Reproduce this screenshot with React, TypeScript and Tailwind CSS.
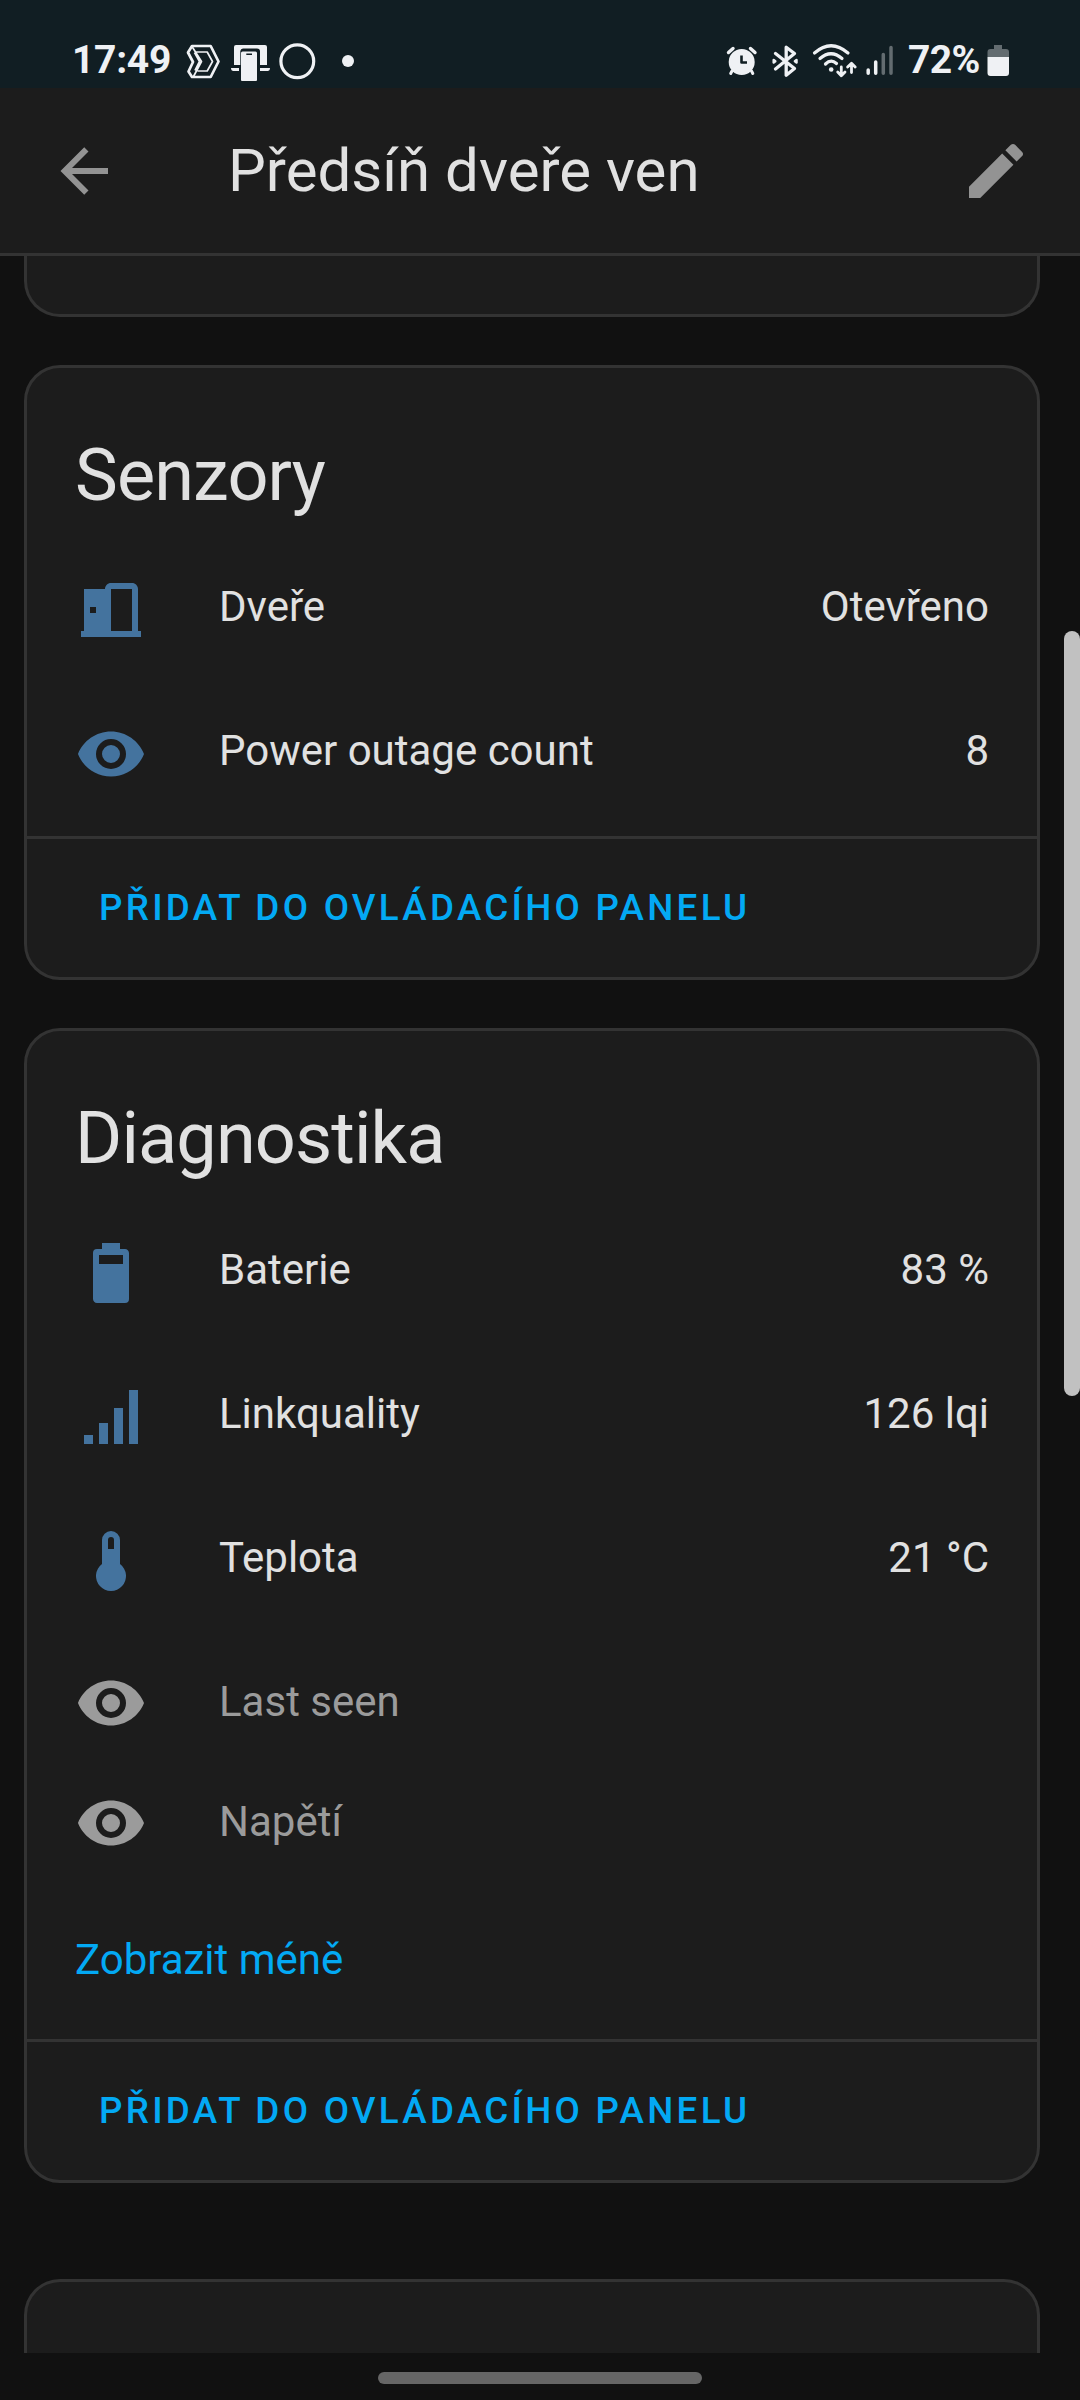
import React from "react";

const icons = {
  arrowLeft:
    "M20,11V13H8L13.5,18.5L12.08,19.92L4.16,12L12.08,4.08L13.5,5.5L8,11H20Z",
  pencil:
    "M20.71,7.04C21.1,6.65 21.1,6 20.71,5.63L18.37,3.29C18,2.9 17.35,2.9 16.96,3.29L15.12,5.12L18.87,8.87M3,17.25V21H6.75L17.81,9.93L14.06,6.18L3,17.25Z",
  door:
    "M12,3C10.89,3 10,3.89 10,5H3V19H2V21H22V19H21V5C21,3.89 20.11,3 19,3H12M12,5H19V19H12V5M5,11H7V13H5V11Z",
  eye:
    "M12,9A3,3 0 0,0 9,12A3,3 0 0,0 12,15A3,3 0 0,0 15,12A3,3 0 0,0 12,9M12,17A5,5 0 0,1 7,12A5,5 0 0,1 12,7A5,5 0 0,1 17,12A5,5 0 0,1 12,17M12,4.5C7,4.5 2.73,7.61 1,12C2.73,16.39 7,19.5 12,19.5C17,19.5 21.27,16.39 23,12C21.27,7.61 17,4.5 12,4.5Z",
  battery:
    "M16,9H8V6H16M16.67,4H15V2H9V4H7.33A1.33,1.33 0 0,0 6,5.33V20.67C6,21.4 6.6,22 7.33,22H16.67A1.33,1.33 0 0,0 18,20.67V5.33C18,4.6 17.4,4 16.67,4Z",
  signal: "M3,21H6V18H3M8,21H11V14H8M13,21H16V9H13M18,21H21V3H18V21Z",
  thermometer:
    "M15 13V5A3 3 0 0 0 9 5V13A5 5 0 1 0 15 13M12 4A1 1 0 0 1 13 5V8H11V5A1 1 0 0 1 12 4Z",
};

function Icon({ path, className }: { path: string; className: string }) {
  return (
    <svg viewBox="0 0 24 24" className={`h-[72px] w-[72px] shrink-0 ${className}`}>
      <path d={path} fill="currentColor" fillRule="evenodd" />
    </svg>
  );
}

function StatusBar() {
  return (
    <div className="flex h-[88px] shrink-0 justify-between bg-[#111e23] pl-[72px] pr-[71px] pt-[34px] text-[#eff1f4]">
      <div className="flex h-[52px] items-center">
        <span className="w-[100px] whitespace-nowrap text-[39px] font-bold leading-[52px] tracking-[-0.3px]">17:49</span>
        <svg viewBox="0 0 186 52" className="h-[52px] w-[186px]" fill="none" stroke="currentColor">
          <g strokeLinejoin="round">
            <path d="M20 12H38.7L46.5 27.5L38.7 43H20L16.5 37.5L21 28L16 18.5Z" strokeWidth="2.7" />
            <path d="M20 12.5L29.5 27.5L21.5 42.5M24 18H35.2L40.5 27.5L35.2 37H25.5M22.5 18.5L27.5 27.5L23 36.5" strokeWidth="1.7" />
          </g>
          <g fill="currentColor" stroke="none">
            <path d="M64 11H93A2 2 0 0 1 95 13V31H88V17.5A3 3 0 0 0 85 14.5H71A3 3 0 0 0 68.3 17V31H62V13A2 2 0 0 1 64 11Z" />
            <path d="M59 34H67V37H61.5Q59 37 59 34ZM88 34H98Q98 37 95.5 37H88Z" />
            <path fillRule="evenodd" d="M70.5 17.5H83.5A1.5 1.5 0 0 1 85 19V46A1 1 0 0 1 84 47H70A1 1 0 0 1 69 46V19A1.5 1.5 0 0 1 70.5 17.5ZM74.3 19.5V21H80V19.5Z" />
          </g>
          <circle cx="125.3" cy="27.3" r="16.4" strokeWidth="3.2" />
          <circle cx="176" cy="27" r="6" fill="currentColor" stroke="none" />
        </svg>
      </div>
      <div className="flex h-[52px] items-center">
        <svg viewBox="0 0 170 52" className="h-[52px] w-[170px]" fill="none" stroke="currentColor" strokeLinecap="round" strokeLinejoin="round">
          {/* alarm clock */}
          <g transform="translate(-724 -34)">
            <circle cx="741.7" cy="62" r="13" fill="currentColor" stroke="none" />
            <path d="M732 71L730.7 73.5M751.5 71L752.8 73.5" strokeWidth="3" />
            <path d="M728.5 52.5L733 48.5M755 52.5L750.5 48.5" strokeWidth="3.4" />
            <path d="M741.5 55.5V62.5H747" stroke="#111e23" strokeWidth="2.6" strokeLinecap="butt" />
          </g>
          {/* bluetooth */}
          <g transform="translate(-724 -34)" strokeWidth="3.3">
            <path d="M775.5 53.5L794.5 68.5L786.2 75.2V47.2L794.5 53.5L775.5 69" />
            <path d="M773.7 60L775.3 61.2L773.7 62.4ZM796.5 60L794.9 61.2L796.5 62.4Z" strokeWidth="2.5" fill="currentColor" />
          </g>
          {/* wifi with traffic arrows */}
          <g transform="translate(-724 -34)" strokeWidth="3.2">
            <path d="M814.5 53Q831 38.5 848 53M820 58.5Q831 49 842 58.5M825.5 64Q831 58.5 836.5 63.5" />
            <circle cx="831.2" cy="69.5" r="2.3" fill="currentColor" stroke="none" />
            <path d="M841.3 67V75.5M837.7 72L841.3 75.8L845 72M851.5 72.5V63.5M847.6 67L851.5 63.2L855.2 67" strokeWidth="2.8" />
          </g>
          {/* mobile signal */}
          <g transform="translate(-724 -34)" strokeWidth="3.5">
            <path d="M868.2 70V73.2M875.7 62V73.2" />
            <path d="M883.3 54.5V73.2M891 47.5V73.2" stroke="#636c70" />
          </g>
        </svg>
        <span className="ml-[14px] w-[74px] whitespace-nowrap text-[39px] font-bold leading-[52px] tracking-[-0.6px]">72%</span>
        <svg viewBox="0 0 22 52" className="ml-[5px] h-[52px] w-[22px]">
          <path d="M7 11H15V15H19A3 3 0 0 1 22 18V23H0.5V18A3 3 0 0 1 3.5 15H7Z" fill="#636c70" />
          <path d="M0.5 23H22V39A3 3 0 0 1 19 42H3.5A3 3 0 0 1 0.5 39Z" fill="currentColor" />
        </svg>
      </div>
    </div>
  );
}

function EntityRow({ icon, name, value }: { icon: string; name: string; value: string }) {
  return (
    <div className="flex h-[120px] items-center">
      <Icon path={icon} className="text-[#44739e]" />
      <span className="-mt-[6px] ml-[72px] flex-1">{name}</span>
      <span className="-mt-[6px]">{value}</span>
    </div>
  );
}

function HiddenRow({ name }: { name: string }) {
  return (
    <div className="flex h-[120px] items-center text-[#9b9b9b]">
      <Icon path={icons.eye} className="" />
      <span className="-mt-[2px] ml-[72px]">{name}</span>
    </div>
  );
}

function Card({ title, children }: { title: string; children: React.ReactNode }) {
  return (
    <section className="rounded-[36px] border-[3px] border-[#333333] bg-[#1c1c1c]">
      <h2 className="px-12 pt-9 text-[72px] leading-[144px] tracking-[-0.012em]">{title}</h2>
      <div className="flex flex-col px-12 pt-[2px]">{children}</div>
      <div className="flex h-[141px] items-center border-t-[3px] border-[#333333] pl-[72px]">
        <button className="text-[36.75px] font-medium uppercase leading-[108px] tracking-[0.0892857em] text-[#03a9f4]">
          Přidat do ovládacího panelu
        </button>
      </div>
    </section>
  );
}

export default function App() {
  return (
    <div className="relative flex h-[2400px] w-[1080px] flex-col overflow-hidden bg-[#111111] font-['Roboto',sans-serif] text-[42px] leading-[50px] text-[#e1e1e1]">
      <StatusBar />
      <header className="flex h-[168px] shrink-0 items-center border-b-[3px] border-[#333333] bg-[#1c1c1c] px-12">
        <Icon path={icons.arrowLeft} className="text-[#939393]" />
        <h1 className="ml-[108px] flex-1 text-[60px] leading-[60px]">Předsíň dveře ven</h1>
        <Icon path={icons.pencil} className="text-[#939393]" />
      </header>

      <main className="flex h-[2097px] shrink-0 flex-col overflow-hidden pl-6 pr-10">
        <div className="h-[61px] shrink-0 rounded-b-[36px] border-[3px] border-t-0 border-[#333333] bg-[#1c1c1c]" />
        <div className="mt-12 flex flex-col gap-12">
          <Card title="Senzory">
            <div className="flex flex-col gap-6 pb-[22px]">
              <EntityRow icon={icons.door} name="Dveře" value="Otevřeno" />
              <EntityRow icon={icons.eye} name="Power outage count" value="8" />
            </div>
          </Card>
          <Card title="Diagnostika">
            <div className="flex flex-col gap-6">
              <EntityRow icon={icons.battery} name="Baterie" value="83 %" />
              <EntityRow icon={icons.signal} name="Linkquality" value="126 lqi" />
              <EntityRow icon={icons.thermometer} name="Teplota" value="21 °C" />
            </div>
            <div className="mt-[22px]">
              <HiddenRow name="Last seen" />
              <HiddenRow name="Napětí" />
            </div>
            <button className="mb-[54px] mt-[52px] self-start text-[#03a9f4]">Zobrazit méně</button>
          </Card>
        </div>
        <div className="mt-24 h-[120px] shrink-0 rounded-t-[36px] border-[3px] border-b-0 border-[#333333] bg-[#1c1c1c]" />
      </main>

      <div className="flex flex-1 justify-center pt-[19px]">
        <div className="h-3 w-[324px] rounded-full bg-[#666666]" />
      </div>

      {/* scrollbar thumb */}
      <div className="absolute right-0 top-[631px] h-[765px] w-4 rounded-full bg-[#c1c1c1]" />
    </div>
  );
}
